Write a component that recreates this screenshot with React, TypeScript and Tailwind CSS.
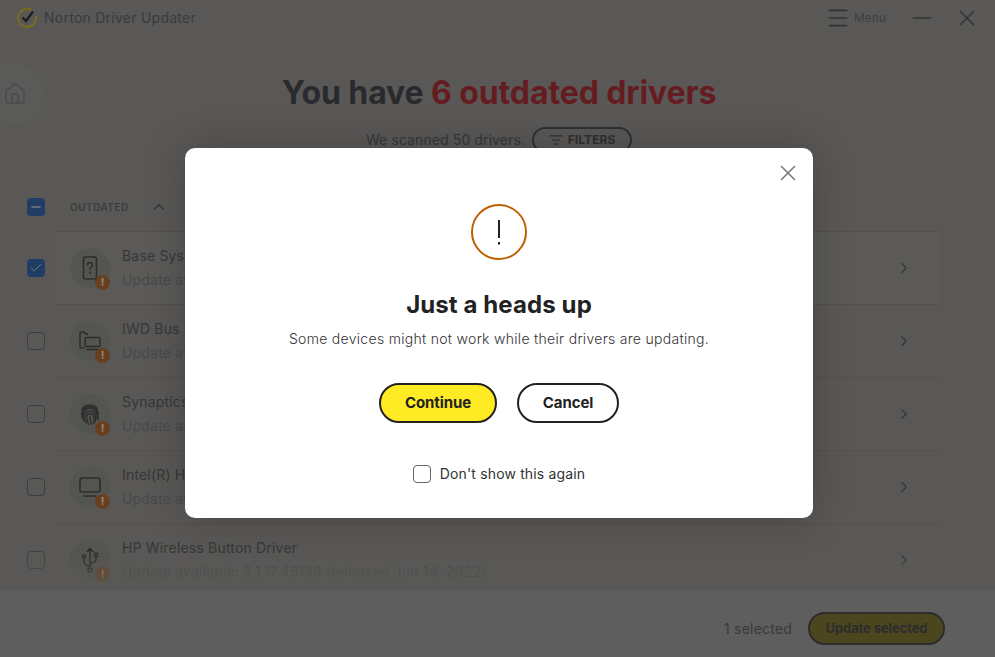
import { ChevronRight, ChevronUp, Check, House, ListFilter, Menu, Minus, X } from "lucide-react";
import type { ReactNode } from "react";

function PhoneIcon() {
  return (
    <svg width="24" height="26" viewBox="0 0 24 26" fill="none" stroke="currentColor" strokeWidth="1.6">
      <rect x="5.500" y="2" width="13" height="22" rx="2" />
      <path d="M9.500 10c0-3.200 5-3.200 5-.2 0 2-2.500 2-2.500 4.500" strokeLinecap="round" />
      <path d="M12 17v1.300" strokeLinecap="round" />
    </svg>
  );
}

function DevicesIcon() {
  return (
    <svg width="24" height="24" viewBox="0 0 24 24" fill="none" stroke="currentColor" strokeWidth="1.500">
      <path d="M6.500 19H3.500A1.500 1.500 0 0 1 2 17.500V4.500A1.500 1.500 0 0 1 3.500 3H6l1.500 2H10" />
      <rect x="7" y="8.500" width="15" height="9" rx="1.500" />
      <path d="M9 20.500h11" strokeLinecap="round" />
    </svg>
  );
}

function FingerprintIcon() {
  return (
    <svg width="22" height="26" viewBox="0 0 22 26" fill="none" stroke="currentColor" strokeWidth="1.300" strokeLinecap="round">
      <path d="M3 8.500C5 3 15 2 18.500 8" />
      <path d="M2.500 13c0-10 16-10 17 0" />
      <path d="M3 17c-1-12 15-14 16-2 .2 2 .2 3-.2 4" />
      <path d="M5 20c-2-9 1-13 6-13s7.500 4 7 11" />
      <path d="M7 22c-2-5-2-12 4-12s6 5 5 11" />
      <path d="M9.500 23.500c-2-5-3-11 1.500-11s4.500 5 3.500 10" />
      <path d="M11 15c0 4 .5 6 1.500 8.500" />
    </svg>
  );
}

function ScreenIcon() {
  return (
    <svg width="24" height="24" viewBox="0 0 24 24" fill="none" stroke="currentColor" strokeWidth="1.600">
      <rect x="2" y="3" width="20" height="14" rx="2" />
      <path d="M6 21h12" strokeLinecap="round" />
    </svg>
  );
}

function UsbIcon() {
  return (
    <svg width="22" height="28" viewBox="0 0 22 28" fill="none" stroke="currentColor" strokeWidth="1.500">
      <path d="M11 3v19" />
      <path d="M8 6l3-3.500L14 6" />
      <path d="M11 20c-3 0-6-1.500-6-4.500V12" />
      <path d="M11 17c3 0 6-1 6-4v-2.500" />
      <circle cx="5" cy="10.500" r="1.500" />
      <rect x="15.500" y="7.500" width="3" height="3" />
      <circle cx="11" cy="24" r="2" />
    </svg>
  );
}

function Logo() {
  return (
    <svg width="22" height="22" viewBox="0 0 22 22" fill="none">
      <path d="M15.500 3.200A9 9 0 1 0 19.800 9" stroke="#c4b23c" strokeWidth="2.200" />
      <path d="M6.500 10.500l3.500 3.500 7-9.500" stroke="#333" strokeWidth="2.400" />
    </svg>
  );
}

function Box({ checked, dash, light }: { checked?: boolean; dash?: boolean; light?: boolean }) {
  if (checked || dash) {
    return (
      <span className="flex h-[18px] w-[18px] shrink-0 items-center justify-center rounded-[4px] bg-[#3668a8] text-[#c5ccd6]">
        {checked ? <Check size={14} strokeWidth={1.6} /> : <Minus size={14} strokeWidth={2.6} />}
      </span>
    );
  }
  return <span className={"h-[18px] w-[18px] shrink-0 rounded-[4px] border " + (light ? "border-[#666] bg-white" : "border-[#686868]")} />;
}

type Driver = { name: string; version: string; icon: ReactNode; selected?: boolean };

const drivers: Driver[] = [
  { name: "Base System Device", version: "Update available: 10.0.19041.1 (released Jun 21, 2006)", icon: <PhoneIcon />, selected: true },
  { name: "IWD Bus Enumerator", version: "Update available: 22.160.0.3 (released Oct 5, 2022)", icon: <DevicesIcon /> },
  { name: "Synaptics WBDI Fingerprint", version: "Update available: 6.0.58.1121 (released Mar 2, 2022)", icon: <FingerprintIcon /> },
  { name: "Intel(R) HD Graphics 620", version: "Update available: 31.0.101.2111 (released Jul 28, 2022)", icon: <ScreenIcon /> },
  { name: "HP Wireless Button Driver", version: "Update available: 2.1.17.45138 (released Jun 14, 2022)", icon: <UsbIcon /> },
];

function Row({ driver }: { driver: Driver }) {
  return (
    <div className="flex h-[73px] shrink-0 items-center">
      <div className="flex w-[55px] shrink-0 justify-end pr-[10px]">
        <Box checked={driver.selected} />
      </div>
      <div
        className={
          "flex h-[73px] w-[885px] shrink-0 items-center border-t border-[#8a8985] pl-[15px] " +
          (driver.selected ? "bg-[#989793]" : "")
        }
      >
        <div className="relative flex h-10 w-10 shrink-0 items-center justify-center rounded-full bg-[#8d8c88] text-[#4a4a4a]">
          {driver.icon}
          <span className="absolute -bottom-[2px] right-0 flex h-[15px] w-[15px] items-center justify-center rounded-full bg-[#ae6a30] text-[11px] leading-none font-bold text-[#e8e2d8]">
            !
          </span>
        </div>
        <div className="ml-3 flex flex-1 flex-col gap-[6px] text-sm leading-[18px] tracking-[0.18px]">
          <span className="text-[#5c5c5c]">{driver.name}</span>
          <span className="text-[#7a7a7a]">{driver.version}</span>
        </div>
        <ChevronRight size={18} strokeWidth={1.6} className="mr-[27px] text-[#5a5a5a]" />
      </div>
    </div>
  );
}

export default function App() {
  return (
    <div className="relative flex h-[657px] w-[995px] flex-col overflow-hidden bg-[#94938f] font-['Inter',sans-serif]">
      <header className="flex h-[35px] shrink-0 items-center pl-[16px] pr-[15px]">
        <Logo />
        <span className="ml-[6px] text-sm tracking-[0.25px] text-[#5e636e]">Norton Driver Updater</span>
        <div className="ml-auto flex items-center text-[#555]">
          <Menu size={26} strokeWidth={1.5} />
          <span className="ml-[3px] text-xs text-[#6a6871]">Menu</span>
          <Minus size={30} strokeWidth={1.2} className="ml-[21px]" />
          <X size={26} strokeWidth={1.3} className="ml-[17px]" />
        </div>
      </header>

      <span className="absolute left-[-17px] top-[64px] flex h-[60px] w-[60px] items-center justify-end rounded-full bg-[#979693] pr-[16px] text-[#7c7c7c]">
        <House size={24} strokeWidth={1.5} />
      </span>

      <main className="relative flex min-h-0 flex-1 flex-col overflow-hidden">
        <h1 className="mt-[36px] pl-[3px] text-center text-[32px] leading-[44px] font-bold tracking-[-0.1px] text-[#45474c]">
          You have <span className="text-[#a83038]">6 outdated drivers</span>
        </h1>
        <div className="mt-[12px] flex items-center justify-center gap-[7px] pl-[3px] text-sm tracking-[0.1px] text-[#5c5c5f]">
          <span>We scanned 50 drivers.</span>
          <span className="flex h-[26px] w-[100px] items-center justify-center gap-[5px] rounded-full border-2 border-[#505050] text-xs font-bold text-[#505050]">
            <ListFilter size={14} strokeWidth={2} />
            FILTERS
          </span>
        </div>
        <div className="mt-[30px] flex h-[48px] shrink-0 items-center pl-[27px]">
          <Box dash />
          <span className="ml-[25px] text-[10px] font-semibold tracking-[0.5px] text-[#666]">OUTDATED</span>
          <ChevronUp size={18} strokeWidth={1.8} className="ml-[21px] text-[#5a5a5a]" />
        </div>
        <div className="flex flex-col">
          {drivers.map((d) => (
            <Row key={d.name} driver={d} />
          ))}
        </div>
        <div className="absolute inset-x-0 bottom-0 h-[40px] bg-linear-to-b from-transparent to-[#94938f]/85" />
      </main>

      <footer className="flex h-[67px] shrink-0 items-center justify-end bg-[#9d9d9d] pr-[50px] pt-[10px]">
        <span className="text-sm tracking-[0.2px] text-[#606060]">1 selected</span>
        <span className="ml-[16px] flex h-[33px] w-[137px] items-center justify-center rounded-full border-2 border-[#4a4a4a] bg-[#7f7535] text-[13px] font-bold tracking-[-0.1px] text-[#4a4a4a]">
          Update selected
        </span>
      </footer>

      <div className="absolute inset-0 bg-black/40 pl-[185px] pt-[148px]">
        <div className="relative flex h-[370px] w-[628px] flex-col items-center rounded-[10px] bg-white shadow-[0_0_40px_rgba(0,0,0,0.22)]">
          <X size={26} strokeWidth={1.4} className="absolute right-[12px] top-[12px] text-[#777]" />
          <svg width="56" height="56" viewBox="0 0 56 56" fill="none" className="mt-[56px] shrink-0">
            <circle cx="28" cy="28" r="27" stroke="#bf6000" strokeWidth="2" />
            <path d="M28 16v18" stroke="#222" strokeWidth="2" />
            <path d="M28 38v2.500" stroke="#222" strokeWidth="2" />
          </svg>
          <h2 className="mt-[29px] text-[24px] leading-[32px] font-bold tracking-[0.1px] text-[#222]">Just a heads up</h2>
          <p className="mt-[8px] text-sm leading-[20px] font-light tracking-[0.3px] text-[#333]">
            Some devices might not work while their drivers are updating.
          </p>
          <div className="mt-[34px] flex gap-[20px]">
            <button className="h-10 w-[118px] rounded-full border-2 border-[#222] bg-[#ffeb23] text-[15px] font-bold tracking-[-0.1px] text-[#222]">
              Continue
            </button>
            <button className="h-10 w-[102px] rounded-full border-2 border-[#222] bg-white text-[15px] font-bold tracking-[-0.1px] text-[#222]">
              Cancel
            </button>
          </div>
          <label className="mt-[41px] flex items-center gap-[9px] text-sm tracking-[0.15px] text-[#333]">
            <Box light />
            Don't show this again
          </label>
        </div>
      </div>
    </div>
  );
}
